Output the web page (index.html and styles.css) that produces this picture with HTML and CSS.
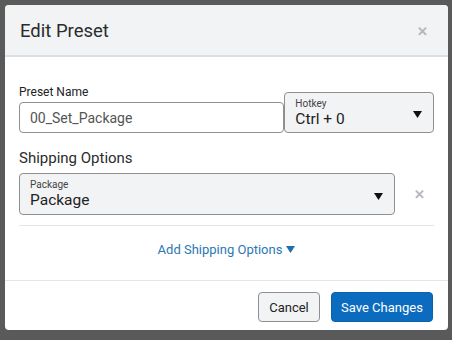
FILE: index.html
```html
<!DOCTYPE html>
<html>
<head>
<meta charset="utf-8">
<link rel="stylesheet" href="styles.css">
</head>
<body>
<div class="backdrop">
  <div class="modal">
    <div class="modal-header">
      <h1 class="title">Edit Preset</h1>
      <span class="close">&#x2715;</span>
    </div>
    <div class="modal-body">
      <div class="row-top">
        <div class="name-col">
          <label class="label">Preset Name</label>
          <div class="input">00_Set_Package</div>
        </div>
        <div class="select hotkey">
          <div class="select-text">
            <span class="small-label">Hotkey</span>
            <span class="value">Ctrl + 0</span>
          </div>
          <svg class="caret" width="9" height="7" viewBox="0 0 9 7"><path d="M0 0H9L4.5 7Z" fill="#111"/></svg>
        </div>
      </div>
      <div class="section-title">Shipping Options</div>
      <div class="row-pkg">
        <div class="select package">
          <div class="select-text">
            <span class="small-label">Package</span>
            <span class="value">Package</span>
          </div>
          <svg class="caret" width="9" height="7" viewBox="0 0 9 7"><path d="M0 0H9L4.5 7Z" fill="#111"/></svg>
        </div>
        <span class="remove">&#x2715;</span>
      </div>
      <div class="add-row">
        <span class="add-link">Add Shipping Options <svg width="9" height="7" viewBox="0 0 9 7"><path d="M0 0H9L4.5 7Z" fill="#1f6fae"/></svg></span>
      </div>
    </div>
    <div class="modal-footer">
      <button class="btn btn-cancel">Cancel</button>
      <button class="btn btn-save">Save Changes</button>
    </div>
  </div>
</div>
</body>
</html>
```
FILE: styles.css
```css
html, body {
  margin: 0;
  padding: 0;
  width: 452px;
  height: 340px;
  overflow: hidden;
  background: #5a5a5a;
  font-family: Roboto, "Liberation Sans", sans-serif;
}
.backdrop {
  padding: 5px 4px 0 5px;
}
.modal {
  width: 443px;
  height: 325px;
  background: #fff;
  border-radius: 4px;
  overflow: hidden;
  display: flex;
  flex-direction: column;
}
.modal-header {
  height: 50px;
  background: #f1f3f5;
  border-bottom: 2px solid #dcdfe3;
  display: flex;
  align-items: center;
  justify-content: space-between;
  padding: 0 20px 0 15px;
}
.title {
  margin: 0;
  font-size: 18.5px;
  font-weight: 400;
  color: #2b2b2b;
  padding-top: 2px;
}
.close {
  color: #b3b8bd;
  font-size: 13px;
  font-weight: 700;
  padding-top: 2px;
}
.modal-body {
  padding: 0 14px;
  height: 223px;
  border-bottom: 1px solid #e3e5e8;
}
.row-top {
  display: flex;
  align-items: flex-end;
  margin-top: 28px;
}
.name-col {
  display: flex;
  flex-direction: column;
  width: 266px;
}
.label {
  font-size: 12px;
  color: #222;
  line-height: 14px;
  margin-bottom: 3px;
}
.input {
  border: 1px solid #8d8f92;
  border-radius: 4px;
  box-sizing: border-box;
  height: 31px;
  padding: 0 10px;
  font-size: 14px;
  color: #555;
  display: flex;
  align-items: center;
}
.select {
  box-sizing: border-box;
  background: #f2f3f5;
  border: 1px solid #8d8f92;
  border-radius: 4px;
  display: flex;
  align-items: center;
  justify-content: space-between;
  padding: 0 11px 0 10px;
}
.hotkey {
  width: 150px;
  height: 41px;
}
.select-text {
  display: flex;
  flex-direction: column;
}
.small-label {
  font-size: 10px;
  color: #444;
  line-height: 12px;
  margin-top: 1px;
}
.value {
  font-size: 15.5px;
  color: #222;
  line-height: 19px;
}
.caret {
  margin-top: 4px;
}
.section-title {
  font-size: 15px;
  color: #2b2b2b;
  margin-top: 15px;
  line-height: 20px;
}
.row-pkg {
  display: flex;
  align-items: center;
  margin-top: 5px;
  padding-bottom: 10px;
  border-bottom: 1px solid #e3e5e8;
}
.package {
  width: 376px;
  height: 42px;
}
.remove {
  color: #b3b8bd;
  font-size: 12.5px;
  font-weight: 700;
  margin-left: 19px;
}
.add-row {
  display: flex;
  justify-content: center;
  margin-top: 16px;
}
.add-link {
  font-size: 13px;
  color: #2a78b4;
  display: flex;
  align-items: center;
  gap: 4px;
}
.modal-footer {
  display: flex;
  justify-content: flex-end;
  align-items: flex-start;
  gap: 11px;
  padding: 11px 15px 0 0;
}
.btn {
  font-family: Roboto, "Liberation Sans", sans-serif;
  font-size: 13px;
  height: 30px;
  border-radius: 4px;
  padding: 0 9px;
  cursor: pointer;
}
.btn-cancel {
  background: #f2f3f5;
  border: 1px solid #8d8f92;
  color: #222;
  width: 62px;
}
.btn-save {
  background: #0b6cbf;
  border: 1px solid #0a62ad;
  color: #fff;
  width: 102px;
}
```
